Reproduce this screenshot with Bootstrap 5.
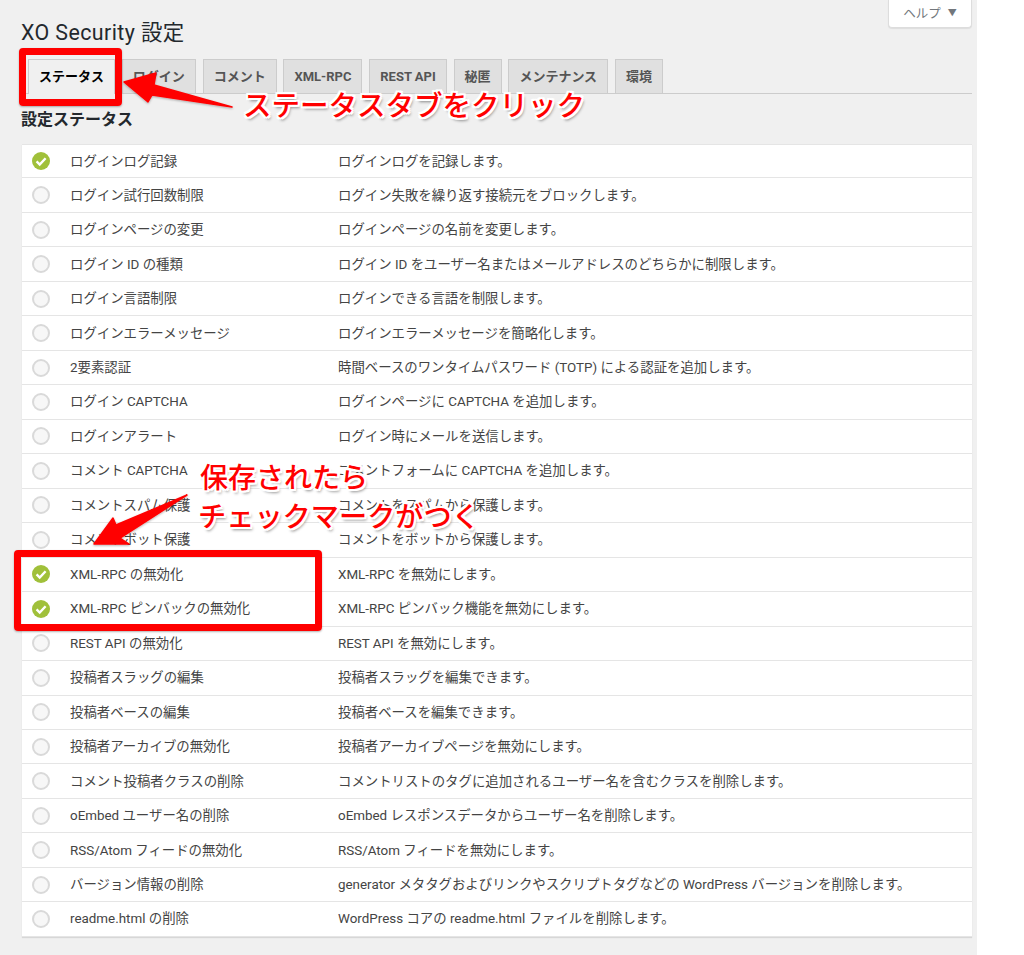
<!DOCTYPE html>
<html lang="ja">
<head>
    <meta charset="UTF-8">
    <meta name="viewport" content="width=device-width, initial-scale=1.0">
    <title>XO Security 設定</title>
    <link href="https://cdn.jsdelivr.net/npm/bootstrap@5.3.0/dist/css/bootstrap.min.css" rel="stylesheet">
    <style>
        html, body {
            height: 955px;
            overflow: hidden;
        }
        body {
            font-family: Roboto, "Noto Sans CJK JP", sans-serif;
            background-color: #ffffff;
            color: #444444;
            font-size: 13.4px;
        }
        .wp-area {
            position: relative;
            width: 977px;
            height: 955px;
            background-color: #f0f0f0;
            padding: 0 5px 0 22px;
        }
        .help-row {
            height: 28px;
        }
        .help-btn {
            width: 84px;
            height: 28px;
            background: #fff;
            border: 1px solid #dddddd;
            border-top: 0;
            border-radius: 0 0 4px 4px;
            box-shadow: 0 1px 1px rgba(0,0,0,.08);
            color: #72777c;
            font-size: 12.5px;
            padding-top: 1px;
        }
        .help-caret {
            font-size: 9px;
            margin-left: 7px;
        }
        .page-title {
            font-size: 21.4px;
            font-weight: 400;
            letter-spacing: .4px;
            line-height: 28px;
            margin: -9px 0 0 -1px;
            color: #23282d;
            height: 40px;
        }
        .wp-tabs {
            height: 35px;
            border-bottom: 1px solid #cccccc;
            gap: 6.8px;
            padding-left: 6px;
            flex-wrap: nowrap;
        }
        .wp-tab {
            height: 34px;
            border: 1px solid #cccccc;
            border-bottom: 0;
            background: #e0e0e0;
            color: #555555;
            font-weight: 700;
            font-size: 13px;
            padding: 0 10px;
            white-space: nowrap;
        }
        .wp-tab-active {
            background: #f0f0f0;
            color: #000000;
            height: 35px;
        }
        .section-title {
            font-size: 16px;
            font-weight: 700;
            line-height: 20px;
            color: #23282d;
            margin: 16px 0 14px -1px;
        }
        .status-list {
            box-shadow: 0 1px 1px rgba(0,0,0,.1);
            border-radius: 0;
        }
        .status-row {
            height: 34.48px;
            padding: 0;
            border-color: #e5e5e5;
            border-left: 0;
            border-right: 0;
            color: #444444;
        }
        .status-icon {
            width: 48px;
            padding-left: 10px;
        }
        .status-name {
            width: 268px;
        }
        .status-name, .status-desc {
            padding-top: 1px;
        }
        .dot-off {
            display: block;
            width: 18px;
            height: 18px;
            border-radius: 50%;
            background: #f7f7f7;
            border: 2px solid #d9d9d9;
        }
        .dot-on {
            display: block;
            width: 18px;
            height: 18px;
        }
        .red-box {
            position: absolute;
            border: 7px solid #ff0000;
            border-radius: 4px;
            box-shadow: 0 1px 2px rgba(0,0,0,.3);
        }
        .red-box-tab {
            left: 19px;
            top: 48px;
            width: 103px;
            height: 58px;
        }
        .red-box-rows {
            left: 14px;
            top: 550px;
            width: 308px;
            height: 81px;
        }
        .arrow-layer {
            position: absolute;
            left: 0;
            top: 0;
            pointer-events: none;
        }
        .note {
            position: absolute;
            color: #ff0000;
            font-family: "Noto Sans CJK JP", sans-serif;
            font-weight: 500;
            white-space: nowrap;
            line-height: 1;
            text-shadow: -2px 0 0 #fff, 2px 0 0 #fff, 0 -2px 0 #fff, 0 2px 0 #fff,
                -2px -2px 0 #fff, 2px -2px 0 #fff, -2px 2px 0 #fff, 2px 2px 0 #fff,
                2px 3px 3px rgba(0,0,0,.45);
        }
        .note-tab {
            left: 243px;
            top: 90px;
            font-size: 28.5px;
        }
        .note-saved {
            left: 200px;
            top: 462px;
            font-size: 28px;
        }
        .note-check {
            left: 198px;
            top: 501px;
            font-size: 28.2px;
        }
    </style>
</head>
<body>
    <div class="wp-area">
        <div class="help-row d-flex justify-content-end">
            <div class="help-btn d-flex align-items-center justify-content-center">ヘルプ<span class="help-caret">▼</span></div>
        </div>
        <h1 class="page-title">XO Security 設定</h1>
        <div class="wp-tabs d-flex">
            <div class="wp-tab wp-tab-active d-flex align-items-center">ステータス</div>
            <div class="wp-tab d-flex align-items-center">ログイン</div>
            <div class="wp-tab d-flex align-items-center">コメント</div>
            <div class="wp-tab d-flex align-items-center">XML-RPC</div>
            <div class="wp-tab d-flex align-items-center">REST API</div>
            <div class="wp-tab d-flex align-items-center">秘匿</div>
            <div class="wp-tab d-flex align-items-center">メンテナンス</div>
            <div class="wp-tab d-flex align-items-center">環境</div>
        </div>
        <h2 class="section-title">設定ステータス</h2>
        <ul class="list-group status-list" id="status-list"></ul>

        <div class="red-box red-box-tab"></div>
        <div class="red-box red-box-rows"></div>
        <svg class="arrow-layer" width="977" height="955" viewBox="0 0 977 955">
            <defs>
                <filter id="arrow-shadow" x="-10%" y="-10%" width="120%" height="120%">
                    <feDropShadow dx="0" dy="1" stdDeviation="1" flood-opacity=".3"/>
                </filter>
            </defs>
            <path d="M124 82 L156 73 L154 85 L232 107 L152 95 L148 102 Z" fill="#ff0000" stroke="#ff0000" stroke-width="1.5" stroke-linejoin="round" filter="url(#arrow-shadow)"/>
            <path d="M94 544 L113 518 L116 525 L187 495 L120 538 L129 544 Z" fill="#ff0000" stroke="#ff0000" stroke-width="1.5" stroke-linejoin="round" filter="url(#arrow-shadow)"/>
        </svg>
        <div class="note note-tab">ステータスタブをクリック</div>
        <div class="note note-saved">保存されたら</div>
        <div class="note note-check">チェックマークがつく</div>
    </div>

    <script src="https://cdn.jsdelivr.net/npm/bootstrap@5.3.0/dist/js/bootstrap.bundle.min.js"></script>
    <script>
        const rows = [
            [1, 'ログインログ記録', 'ログインログを記録します。'],
            [0, 'ログイン試行回数制限', 'ログイン失敗を繰り返す接続元をブロックします。'],
            [0, 'ログインページの変更', 'ログインページの名前を変更します。'],
            [0, 'ログイン ID の種類', 'ログイン ID をユーザー名またはメールアドレスのどちらかに制限します。'],
            [0, 'ログイン言語制限', 'ログインできる言語を制限します。'],
            [0, 'ログインエラーメッセージ', 'ログインエラーメッセージを簡略化します。'],
            [0, '2要素認証', '時間ベースのワンタイムパスワード (TOTP) による認証を追加します。'],
            [0, 'ログイン CAPTCHA', 'ログインページに CAPTCHA を追加します。'],
            [0, 'ログインアラート', 'ログイン時にメールを送信します。'],
            [0, 'コメント CAPTCHA', 'コメントフォームに CAPTCHA を追加します。'],
            [0, 'コメントスパム保護', 'コメントをスパムから保護します。'],
            [0, 'コメントボット保護', 'コメントをボットから保護します。'],
            [1, 'XML-RPC の無効化', 'XML-RPC を無効にします。'],
            [1, 'XML-RPC ピンバックの無効化', 'XML-RPC ピンバック機能を無効にします。'],
            [0, 'REST API の無効化', 'REST API を無効にします。'],
            [0, '投稿者スラッグの編集', '投稿者スラッグを編集できます。'],
            [0, '投稿者ベースの編集', '投稿者ベースを編集できます。'],
            [0, '投稿者アーカイブの無効化', '投稿者アーカイブページを無効にします。'],
            [0, 'コメント投稿者クラスの削除', 'コメントリストのタグに追加されるユーザー名を含むクラスを削除します。'],
            [0, 'oEmbed ユーザー名の削除', 'oEmbed レスポンスデータからユーザー名を削除します。'],
            [0, 'RSS/Atom フィードの無効化', 'RSS/Atom フィードを無効にします。'],
            [0, 'バージョン情報の削除', 'generator メタタグおよびリンクやスクリプトタグなどの WordPress バージョンを削除します。'],
            [0, 'readme.html の削除', 'WordPress コアの readme.html ファイルを削除します。']
        ];
        const checkIcon = '<svg class="dot-on" viewBox="0 0 18 18"><circle cx="9" cy="9" r="9" fill="#a0c03a"/><path d="M4.6 9.4 L7.7 12.5 L13.6 6.2" fill="none" stroke="#fff" stroke-width="2.4"/></svg>';
        document.getElementById('status-list').innerHTML = rows.map(r => `
            <li class="list-group-item status-row d-flex align-items-center text-nowrap">
                <span class="status-icon">${r[0] ? checkIcon : '<span class="dot-off"></span>'}</span>
                <span class="status-name">${r[1]}</span>
                <span class="status-desc">${r[2]}</span>
            </li>`).join('');
    </script>
</body>
</html>
